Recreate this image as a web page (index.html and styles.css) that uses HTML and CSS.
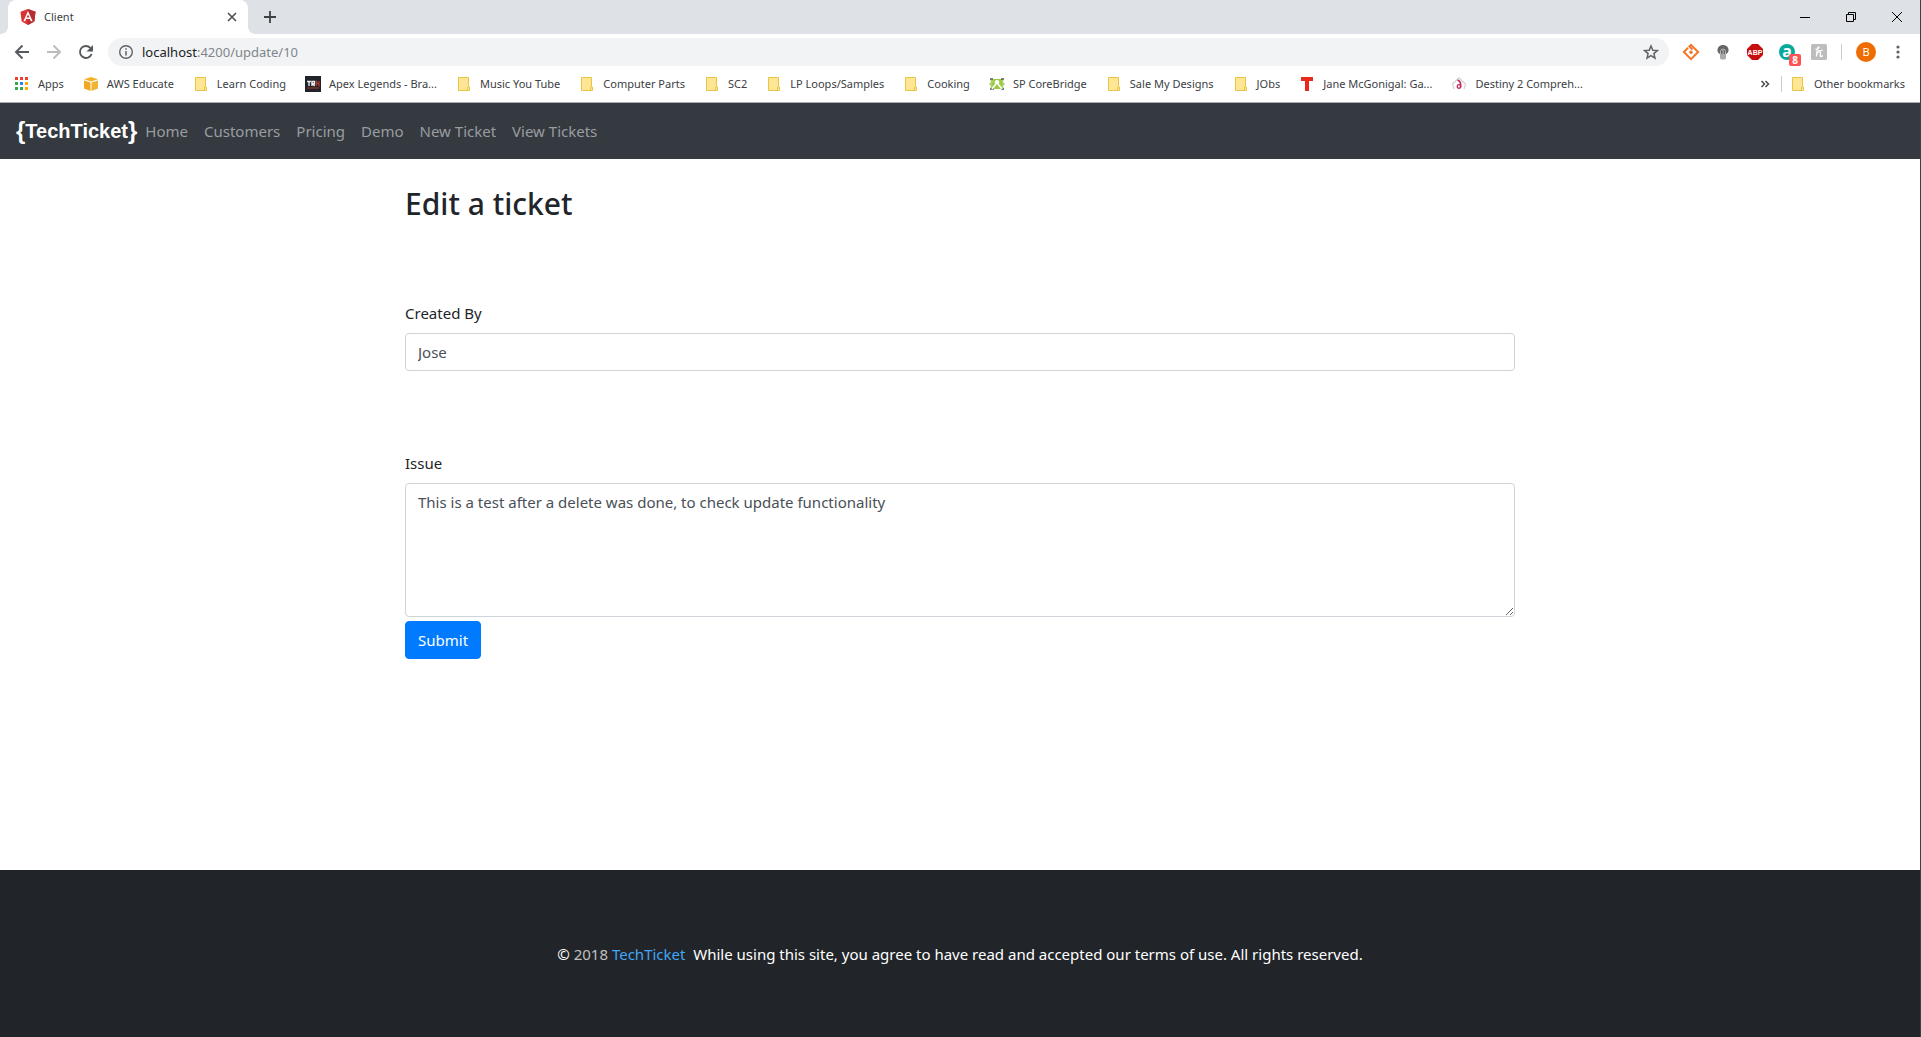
FILE: index.html
```html
<!DOCTYPE html>
<html lang="en">
<head>
<meta charset="utf-8">
<meta name="viewport" content="width=device-width, initial-scale=1">
<title>Client</title>
<link rel="stylesheet" href="styles.css">
</head>
<body>
<svg class="symbols" aria-hidden="true">
  <symbol id="folder" viewBox="0 0 16 16">
    <path d="M2.500 1.500h10v9.500h1v3.500h-11z" fill="#ffe694" stroke="#e8c548"/>
    <path d="M11.500 11v3.500" stroke="#e8c548" fill="none"/>
  </symbol>
</svg>
<header class="browser">
  <div class="tab-strip">
    <div class="tab">
      <svg class="icon" viewBox="0 0 16 16"><path d="M8 0l7.500 2.700-1.200 9.800L8 16l-6.300-3.500L.5 2.700z" fill="#dd3135"/><path d="M8 0l7.500 2.700-1.200 9.800L8 16z" fill="#b52e31"/><path fill-rule="evenodd" d="M8 2L3.400 12.300h1.800l.9-2.300h3.800l.9 2.300h1.800zm0 3.500L9.400 8.600H6.600z" fill="#fff"/></svg>
      <span class="tab-title">Client</span>
      <button class="plain" aria-label="Close tab"><svg class="icon" viewBox="0 0 16 16"><path d="M4 4l8 8M12 4l-8 8" stroke="#4a4d51" stroke-width="1.600"/></svg></button>
    </div>
    <button class="plain new-tab" aria-label="New tab"><svg class="icon" viewBox="0 0 16 16"><path d="M8 2v12M2 8h12" stroke="#3c4043" stroke-width="1.800"/></svg></button>
    <div class="window-buttons">
      <button class="plain" aria-label="Minimize"><svg class="icon" viewBox="0 0 16 16"><path d="M3 8.500h10" stroke="#000"/></svg></button>
      <button class="plain" aria-label="Restore"><svg class="icon" viewBox="0 0 16 16"><path d="M3.500 5.500h7v7h-7zM5.500 5v-1.500h7v7H11" fill="none" stroke="#000"/></svg></button>
      <button class="plain" aria-label="Close"><svg class="icon" viewBox="0 0 16 16"><path d="M3 3l10 10M13 3L3 13" stroke="#000"/></svg></button>
    </div>
  </div>
  <div class="toolbar">
    <div class="navigation">
      <button class="plain" aria-label="Back"><svg class="icon" viewBox="0 0 16 16"><path d="M15 8H2M8.500 1.500L2 8l6.500 6.500" fill="none" stroke="#55585c" stroke-width="1.900"/></svg></button>
      <button class="plain" aria-label="Forward"><svg class="icon" viewBox="0 0 16 16"><path d="M1 8h13M7.500 1.500L14 8l-6.500 6.500" fill="none" stroke="#babcbe" stroke-width="1.900"/></svg></button>
      <button class="plain" aria-label="Reload"><svg class="icon" viewBox="0 0 16 16"><path d="M13.600 10A6 6 0 1 1 12.300 3.800L14 5.500" fill="none" stroke="#55585c" stroke-width="1.900"/><path d="M15 1v6.500H8.500z" fill="#55585c"/></svg></button>
    </div>
    <div class="omnibox">
      <svg class="icon" viewBox="0 0 16 16"><circle cx="8" cy="8" r="6.300" fill="none" stroke="#5f6368" stroke-width="1.400"/><path d="M8 7v4.500M8 4.300v1.500" stroke="#5f6368" stroke-width="1.500"/></svg>
      <span class="url"><span class="host">localhost</span>:4200/update/10</span>
      <svg class="icon" viewBox="0 0 16 16"><path d="M8 2l1.800 4.200 4.600.4-3.500 3 1.100 4.500L8 11.700l-4 2.400 1.100-4.500-3.500-3 4.600-.4z" fill="none" stroke="#5f6368" stroke-width="1.500"/></svg>
    </div>
    <div class="extensions">
      <svg class="icon" viewBox="0 0 16 16"><path d="M5 3.800L.9 8 8 15.100 15.100 8 8 .9 6.400 2.500 9.500 5.600" fill="none" stroke="#f77425" stroke-width="2"/><circle cx="8" cy="8.300" r="1.700" fill="#f77425"/></svg>
      <svg class="icon" viewBox="0 0 16 16"><path d="M8 1a5.500 5 0 0 0-3 9.200h6A5.500 5 0 0 0 8 1z" fill="#666"/><path d="M5.500 10V7.500a2.500 2.500 0 0 1 5 0V10M8 6v4" stroke="#bbb" fill="none"/><path d="M5 10h6v4.500l-1.500 1h-3L5 14.500z" fill="#aaa"/></svg>
      <svg class="icon" viewBox="0 0 16 16"><path d="M5 0h6l5 5v6l-5 5H5l-5-5V5z" fill="#c70d0d"/><text x="8" y="10.500" class="abp">ABP</text></svg>
      <span class="badge-host">
        <svg class="icon" viewBox="0 0 16 16"><circle cx="8" cy="8" r="8" fill="#06a99c"/><text x="8" y="12.500" class="letter-a">a</text></svg>
        <span class="badge">8</span>
      </span>
      <svg class="icon" viewBox="0 0 16 16"><rect width="16" height="16" rx="1.500" fill="#bdbdbd"/><path d="M4.500 5.500C7 5 9 3.500 7.500 3 6 3 6 8 5.500 12.500M5.800 10c.8-2.500 3.700-3 3.700-1 0 1.500-1 3.500.5 3.500 1 0 1.500-.8 1.500-1.300M7 6.500c1.500.6 3 .3 4.500-.5" fill="none" stroke="#fff" stroke-width="1.300"/></svg>
    </div>
    <span class="divider"></span>
    <button class="avatar" aria-label="Profile">B</button>
    <button class="plain" aria-label="Menu"><svg class="icon" viewBox="0 0 16 16"><g fill="#5f6368"><circle cx="8" cy="3" r="1.600"/><circle cx="8" cy="8" r="1.600"/><circle cx="8" cy="13" r="1.600"/></g></svg></button>
  </div>
  <nav class="bookmarks" aria-label="Bookmarks">
    <a href="#"><svg class="icon" viewBox="0 0 16 16"><path d="M1 1h3v3H1zM6 1h3v3H6z" fill="#ea4335"/><path d="M11 1h3v3h-3z" fill="#ea4335"/><path d="M1 6h3v3H1zM1 11h3v3H1zM6 11h3v3H6z" fill="#34a853"/><path d="M6 6h3v3H6z" fill="#2a84f5"/><path d="M11 6h3v3h-3zM11 11h3v3h-3z" fill="#fbab05"/></svg>Apps</a>
    <a href="#"><svg class="icon" viewBox="0 0 16 16"><path d="M1 3.200L8 1l7 2.200L8 5.500z" fill="#f5b02a"/><path d="M1 4.500l6.500 2V15L1 12.500z" fill="#f3a91f"/><path d="M15 4.500l-6.500 2V15l6.500-2.500z" fill="#f0b434"/></svg>AWS Educate</a>
    <a href="#"><svg class="icon"><use href="#folder"/></svg>Learn Coding</a>
    <a href="#"><svg class="icon" viewBox="0 0 16 16"><path d="M0 0h16v16H0z" fill="#20242a"/><path d="M2 5.500h4M4 5.500V10M7 10V5.500h2.500v2.200H7.500L9.700 10" stroke="#eee" stroke-width="1.400" fill="none"/><path d="M11.500 10V5.500l2.500 4V5M2 12h12" stroke="#a9392b" stroke-width="1.200" fill="none"/></svg>Apex Legends - Bra...</a>
    <a href="#"><svg class="icon"><use href="#folder"/></svg>Music You Tube</a>
    <a href="#"><svg class="icon"><use href="#folder"/></svg>Computer Parts</a>
    <a href="#"><svg class="icon"><use href="#folder"/></svg>SC2</a>
    <a href="#"><svg class="icon"><use href="#folder"/></svg>LP Loops/Samples</a>
    <a href="#"><svg class="icon"><use href="#folder"/></svg>Cooking</a>
    <a href="#"><svg class="icon" viewBox="0 0 16 16"><path d="M3 3h10v10H3z" fill="#9acb3c"/><path d="M1 3h4L3 8l3 5H1l1-3-2-2 2-2z" fill="#a9cf6b"/><path d="M15 3h-3l1 5-1 5h3l-1-3 2-2-2-2z" fill="#a9cf6b"/><path d="M1 3h3M12 3h3M1 13h4M12 13h3" stroke="#5b5f55" stroke-width="1.500"/><circle cx="8" cy="6.300" r="2.300" fill="#fff"/><path d="M9 8l4 5M7 8l-4 5" stroke="#fff" stroke-width="1.600"/></svg>SP CoreBridge</a>
    <a href="#"><svg class="icon"><use href="#folder"/></svg>Sale My Designs</a>
    <a href="#"><svg class="icon"><use href="#folder"/></svg>JObs</a>
    <a href="#"><svg class="icon" viewBox="0 0 16 16"><path d="M2 1h12v4h-4v10H6V5H2z" fill="#e62b1e"/></svg>Jane McGonigal: Ga...</a>
    <a href="#"><svg class="icon" viewBox="0 0 16 16"><path d="M3 13L1.500 8 8 2l6.500 6L13 13" fill="none" stroke="#d4d4d4" stroke-width="1.300"/><path d="M6.500 4c3 1 3.800 4 2.800 8" fill="none" stroke="#c2285a" stroke-width="1.500"/><circle cx="8" cy="10.500" r="1.800" fill="none" stroke="#c2285a" stroke-width="1.300"/></svg>Destiny 2 Compreh...</a>
    <div class="bookmarks-end">
      <button class="plain" aria-label="More bookmarks"><svg class="icon" viewBox="0 0 16 16"><path d="M4.500 5l3 3-3 3M8.500 5l3 3-3 3" fill="none" stroke="#4a4d51" stroke-width="1.500"/></svg></button>
      <span class="divider"></span>
      <a href="#"><svg class="icon"><use href="#folder"/></svg>Other bookmarks</a>
    </div>
  </nav>
</header>
<div class="page">
  <nav class="navbar" aria-label="Main">
    <a class="brand" href="#"><span class="brace">{</span>TechTicket<span class="brace">}</span></a>
    <a href="#">Home</a>
    <a href="#">Customers</a>
    <a href="#">Pricing</a>
    <a href="#">Demo</a>
    <a href="#">New Ticket</a>
    <a href="#">View Tickets</a>
  </nav>
  <main class="container">
    <h1>Edit a ticket</h1>
    <form>
      <div class="field">
        <label for="createdBy">Created By</label>
        <input id="createdBy" type="text" value="Jose">
      </div>
      <div class="field">
        <label for="issue">Issue</label>
        <textarea id="issue" rows="5">This is a test after a delete was done, to check update functionality</textarea>
      </div>
      <button class="submit" type="submit">Submit</button>
    </form>
  </main>
  <footer class="footer">
    <p>© <span class="year">2018</span> <a href="#">TechTicket</a>&nbsp; While using this site, you agree to have read and accepted our terms of use. All rights reserved.</p>
  </footer>
</div>
</body>
</html>
```
FILE: styles.css
```css
* {
  box-sizing: border-box;
}

body {
  margin: 0;
  min-height: 100vh;
  display: flex;
  flex-direction: column;
  border-right: 1px solid #3c3f43;
  background: #fff;
  color: #212529;
  font: 15px/24px "Noto Sans", "Open Sans", sans-serif;
}

a {
  text-decoration: none;
}

button,
input,
textarea {
  font: inherit;
}

.symbols {
  position: absolute;
  width: 0;
  height: 0;
}

.icon {
  display: block;
  flex: none;
  width: 16px;
  height: 16px;
  overflow: visible;
}

.plain {
  padding: 0;
  border: 0;
  background: none;
}

/* Browser window */
.browser {
  border-bottom: 1px solid #a9abae;
  font-size: 11px;
  line-height: 16px;
}

.tab-strip {
  display: flex;
  align-items: center;
  height: 34px;
  padding-left: 8px;
  background: #dee1e6;
}

.tab {
  position: relative;
  display: flex;
  align-items: center;
  gap: 8px;
  width: 240px;
  height: 34px;
  padding: 0 8px 0 12px;
  border-radius: 8px 8px 0 0;
  background: #fff;
  color: #3c4043;
}

.tab::before,
.tab::after {
  content: "";
  position: absolute;
  bottom: 0;
  width: 8px;
  height: 8px;
}

.tab::before {
  right: 100%;
  background: radial-gradient(circle at 0 0, #dee1e6 8px, #fff 8px);
}

.tab::after {
  left: 100%;
  background: radial-gradient(circle at 100% 0, #dee1e6 8px, #fff 8px);
}

.tab-title {
  flex: 1;
}

.new-tab {
  margin-left: 14px;
}

.window-buttons {
  display: flex;
  gap: 30px;
  height: 28px;
  margin-left: auto;
  padding-right: 15px;
}

.toolbar {
  display: flex;
  align-items: center;
  gap: 14px;
  height: 36px;
  padding: 0 14px;
}

.navigation,
.extensions {
  display: flex;
  gap: 16px;
}

.omnibox {
  flex: 1;
  display: flex;
  align-items: center;
  gap: 8px;
  height: 28px;
  padding: 0 10px;
  border-radius: 14px;
  background: #f1f3f4;
  color: #80868b;
  font-size: 13px;
}

.url {
  flex: 1;
}

.host {
  color: #202124;
}

.abp {
  fill: #fff;
  font: bold 7px "Liberation Sans", sans-serif;
  text-anchor: middle;
}

.letter-a {
  fill: #fff;
  font: bold 16px "Noto Sans", sans-serif;
  text-anchor: middle;
}

.badge-host {
  position: relative;
}

.badge {
  position: absolute;
  top: 10px;
  left: 10px;
  width: 12px;
  height: 12px;
  border-radius: 2px;
  background: #ff5252;
  color: #fff;
  font-weight: bold;
  font-size: 10px;
  line-height: 12px;
  text-align: center;
}

.divider {
  width: 1px;
  height: 16px;
  background: #c8cacd;
}

.avatar {
  width: 20px;
  height: 20px;
  padding: 0;
  border: 0;
  border-radius: 50%;
  background: #ef6c00;
  color: #fff;
  font-size: 11px;
}

.bookmarks {
  display: flex;
  align-items: center;
  gap: 19px;
  height: 32px;
  padding: 0 15px 4px 14px;
  white-space: nowrap;
}

.bookmarks a {
  display: flex;
  align-items: center;
  gap: 8px;
  color: #3c4043;
}

.bookmarks-end {
  display: flex;
  align-items: center;
  gap: 8px;
  margin-left: auto;
}

/* Application */
.page {
  flex: 1;
  display: flex;
  flex-direction: column;
}

.navbar {
  display: flex;
  align-items: center;
  gap: 16px;
  height: 56px;
  padding: 0 16px;
  background: #343a40;
}

.navbar a {
  color: #9a9da0;
}

.navbar .brand {
  display: flex;
  align-items: center;
  margin-right: -8px;
  color: #fff;
  font: bold 20px/24px "Liberation Sans", Arial, sans-serif;
}

.brace {
  font-size: 24px;
}

.container {
  width: 100%;
  max-width: 1140px;
  margin: 0 auto;
  padding: 24px 15px 0;
}

h1 {
  margin: 0 0 76px;
  font-weight: 500;
  font-size: 30px;
  line-height: 42px;
}

.field {
  display: flex;
  flex-direction: column;
  gap: 8px;
}

.field + .field {
  margin-top: 80px;
}

.field input,
.field textarea {
  width: 100%;
  padding: 6px 12px;
  border: 1px solid #ced4da;
  border-radius: 4px;
  background: #fff;
  color: #495057;
}

.field input {
  height: 38px;
}

.submit {
  margin-top: 4px;
  padding: 6px 12px;
  border: 1px solid #007bff;
  border-radius: 4px;
  background: #007bff;
  color: #fff;
}

.footer {
  margin-top: auto;
  padding: 72px 16px 71px;
  background: #212529;
  color: #fff;
  text-align: center;
}

.footer p {
  margin: 0;
}

.year {
  color: #c0c0c0;
}

.footer a {
  color: #42a5f5;
}
```
